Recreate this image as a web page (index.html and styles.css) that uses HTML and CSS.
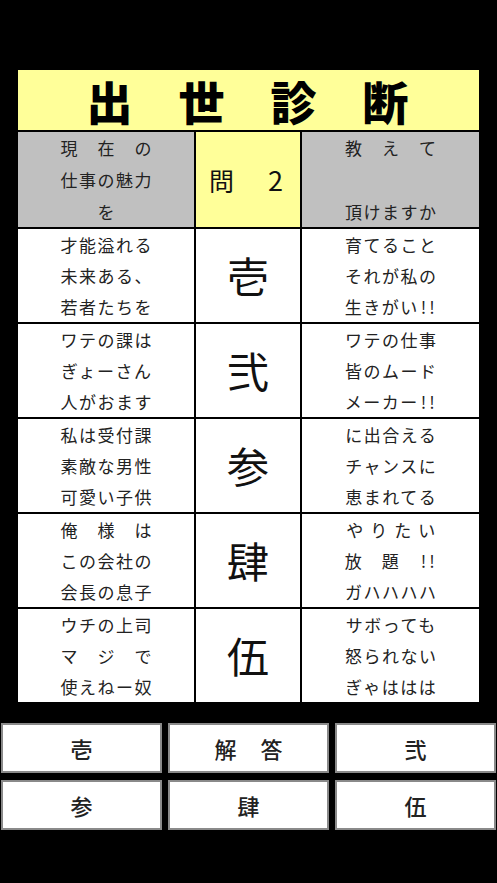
FILE: index.html
```html
<!DOCTYPE html>
<html lang="ja">
<head>
<meta charset="utf-8">
<title>出世診断</title>
<link rel="stylesheet" href="styles.css">
</head>
<body>
<div class="page">
  <div class="board">
    <div class="title">出世診断</div>

    <div class="cell gray txt">
      <div>現　在　の</div>
      <div>仕事の魅力</div>
      <div>を</div>
    </div>
    <div class="cell yellow q"><span>問</span><span class="two">2</span></div>
    <div class="cell gray txt">
      <div>教　え　て</div>
      <div>&nbsp;</div>
      <div>頂けますか</div>
    </div>

    <div class="cell txt"><div>才能溢れる</div><div>未来ある、</div><div>若者たちを</div></div>
    <div class="cell num">壱</div>
    <div class="cell txt"><div>育てること</div><div>それが私の</div><div>生きがい<span class="hw">!!</span></div></div>

    <div class="cell txt"><div>ワテの課は</div><div>ぎょーさん</div><div>人がおます</div></div>
    <div class="cell num">弐</div>
    <div class="cell txt"><div>ワテの仕事</div><div>皆のムード</div><div>メーカー<span class="hw">!!</span></div></div>

    <div class="cell txt"><div>私は受付課</div><div>素敵な男性</div><div>可愛い子供</div></div>
    <div class="cell num">参</div>
    <div class="cell txt"><div>に出合える</div><div>チャンスに</div><div>恵まれてる</div></div>

    <div class="cell txt"><div>俺　様　は</div><div>この会社の</div><div>会長の息子</div></div>
    <div class="cell num">肆</div>
    <div class="cell txt"><div class="spread">やりたい</div><div>放　題　<span class="hw">!!</span></div><div>ガハハハハ</div></div>

    <div class="cell txt"><div>ウチの上司</div><div>マ　ジ　で</div><div>使えねー奴</div></div>
    <div class="cell num">伍</div>
    <div class="cell txt"><div>サボっても</div><div>怒られない</div><div>ぎゃははは</div></div>
  </div>

  <div class="buttons">
    <div class="btn">壱</div>
    <div class="btn wide">解答</div>
    <div class="btn">弐</div>
    <div class="btn">参</div>
    <div class="btn">肆</div>
    <div class="btn">伍</div>
  </div>
</div>
</body>
</html>
```

FILE: styles.css
```css
html, body {
  margin: 0;
  padding: 0;
  background: #000;
}

body {
  width: 497px;
  height: 883px;
  overflow: hidden;
  font-family: "Noto Sans CJK JP", "Noto Sans", sans-serif;
  color: #222;
}

.page {
  padding-top: 70px;
}

.board {
  margin-left: 18px;
  width: 461px;
  display: grid;
  grid-template-columns: 176px 104px 177px;
  grid-template-rows: 60px 95px repeat(5, 93px);
  column-gap: 2px;
  row-gap: 2px;
  background: #000;
  padding-bottom: 1px;
}

.title {
  grid-column: 1 / 4;
  background: #ffff99;
  color: #000;
  font-size: 46px;
  font-weight: 900;
  letter-spacing: 46px;
  padding-left: 44px;
  text-align: center;
  line-height: 60px;
}

.cell {
  background: #fff;
  display: flex;
  flex-direction: column;
  justify-content: center;
  align-items: center;
}

.gray {
  background: #c0c0c0;
}

.yellow {
  background: #ffff99;
}

.txt {
  font-size: 17px;
  line-height: 31px;
  letter-spacing: 1.5px;
  padding-left: 1.5px;
}

.gray.txt {
  line-height: 32px;
}

.txt div {
  white-space: nowrap;
}

.txt .spread {
  letter-spacing: 7px;
  padding-left: 6px;
}

.hw {
  display: inline-block;
  letter-spacing: 3px;
  padding-left: 2px;
}

.q {
  flex-direction: row;
  gap: 34px;
  font-size: 25px;
  color: #111;
  padding-right: 4px;
}

.q .two {
  font-size: 27px;
}

.num {
  font-size: 42px;
  color: #111;
  padding-bottom: 2px;
}

.buttons {
  margin-top: 20px;
  padding: 0 1px;
  display: grid;
  grid-template-columns: 1fr 1fr 1fr;
  column-gap: 6px;
  row-gap: 7px;
}

.btn {
  height: 46px;
  background: #fff;
  border: 2px solid #8a8a8a;
  display: flex;
  align-items: center;
  justify-content: center;
  font-size: 22px;
  font-weight: 500;
  color: #222;
}

.btn.wide {
  letter-spacing: 24px;
  padding-left: 24px;
}
```
